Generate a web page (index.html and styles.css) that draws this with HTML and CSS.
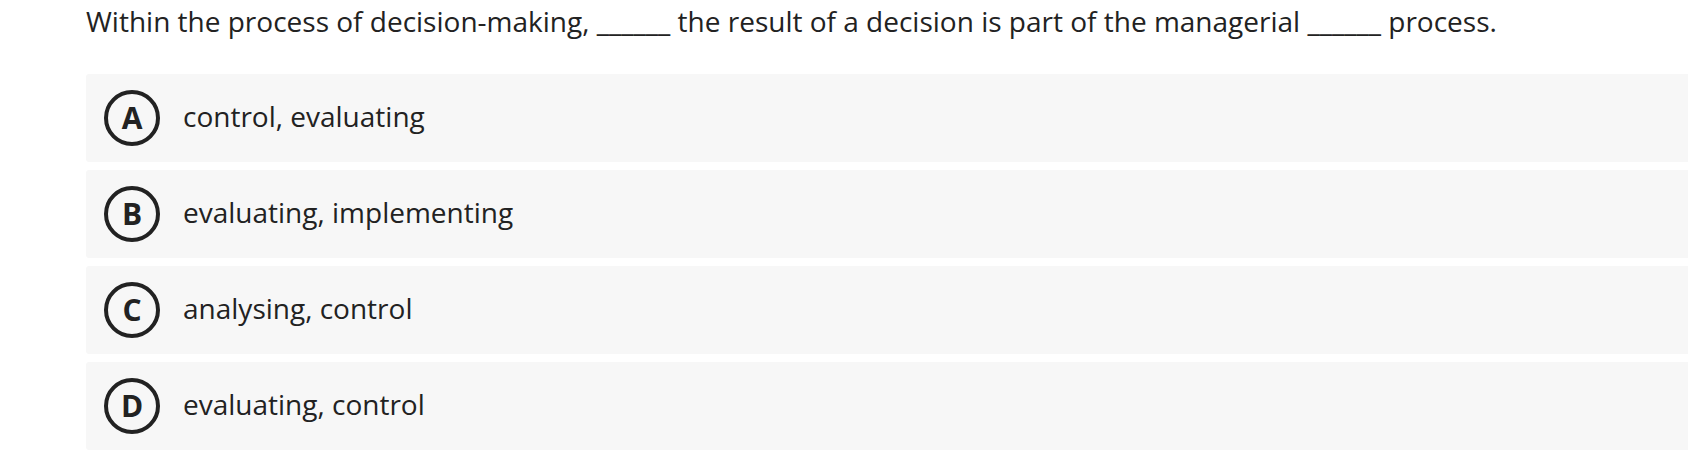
FILE: index.html
```html
<!DOCTYPE html>
<html lang="en">
<head>
<meta charset="utf-8">
<link rel="stylesheet" href="styles.css">
</head>
<body>
<div class="quiz">
  <p class="question">Within the process of decision-making, ______ the result of a decision is part of the managerial ______ process.</p>
  <ul class="options">
    <li class="option"><span class="badge">A</span><span class="label">control, evaluating</span></li>
    <li class="option"><span class="badge">B</span><span class="label">evaluating, implementing</span></li>
    <li class="option"><span class="badge">C</span><span class="label">analysing, control</span></li>
    <li class="option"><span class="badge">D</span><span class="label">evaluating, control</span></li>
  </ul>
</div>
</body>
</html>
```
FILE: styles.css
```css
* { box-sizing: border-box; }
html, body { margin: 0; padding: 0; background: #fff; }
body {
  font-family: "Open Sans", "Liberation Sans", sans-serif;
  color: #222;
  overflow: hidden;
}
.quiz {
  padding: 0 0 0 86px;
}
.question {
  margin: 0;
  font-size: 28px;
  line-height: 42px;
  white-space: nowrap;
}
.options {
  list-style: none;
  margin: 32px 0 0 0;
  padding: 0;
  display: flex;
  flex-direction: column;
  gap: 8px;
}
.option {
  height: 88px;
  background: #f7f7f7;
  border-radius: 3px 0 0 3px;
  display: flex;
  align-items: center;
  padding-left: 18px;
}
.badge {
  width: 56px;
  height: 56px;
  border: 4px solid #222;
  border-radius: 50%;
  display: flex;
  align-items: center;
  justify-content: center;
  font-weight: 700;
  font-size: 30px;
  line-height: 1;
  flex: none;
}
.label {
  margin-left: 23px;
  padding-bottom: 4px;
  font-size: 28px;
  line-height: 36px;
}
```
